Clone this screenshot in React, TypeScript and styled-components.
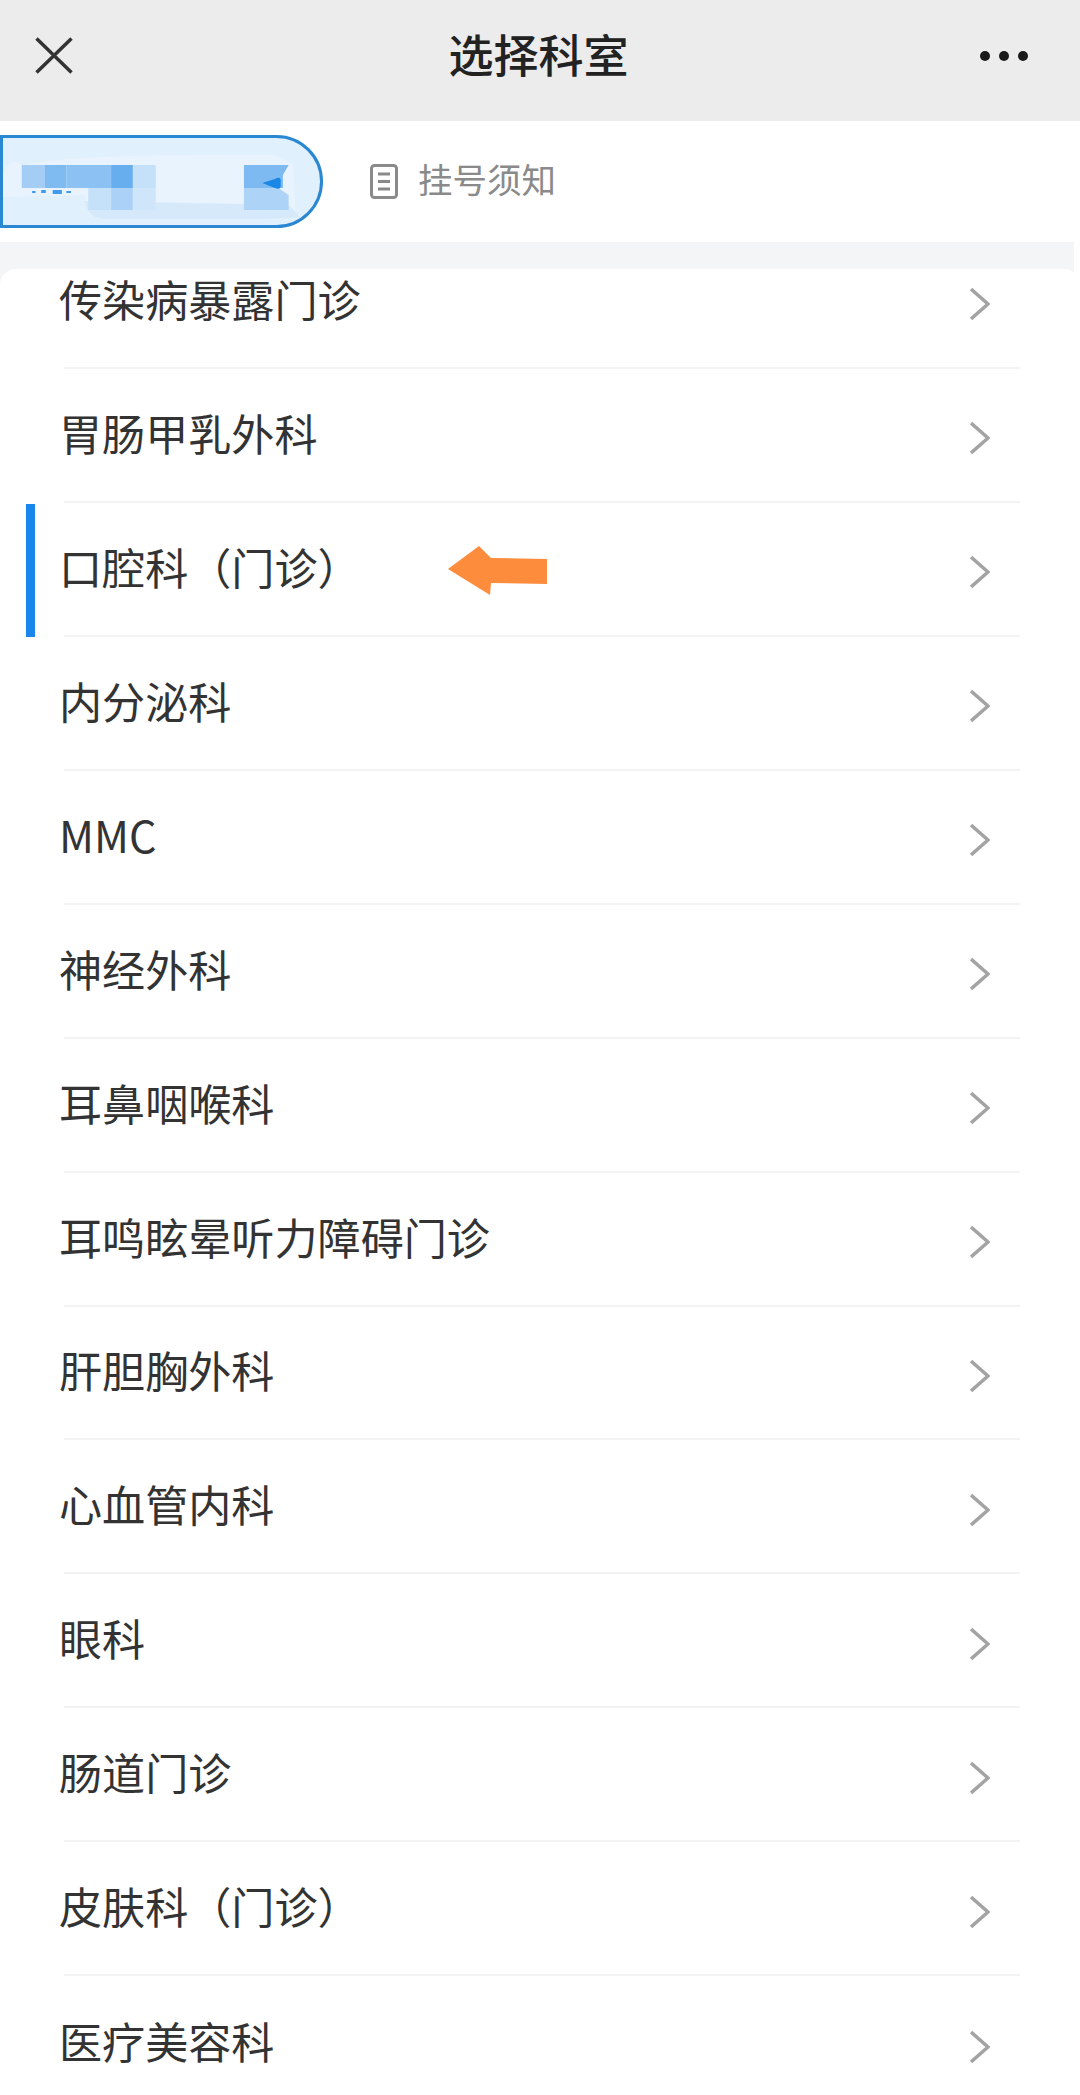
import styled, { createGlobalStyle } from 'styled-components'

const ROW_HEIGHT = 133.95

const departments = [
  '传染病暴露门诊',
  '胃肠甲乳外科',
  '口腔科（门诊）',
  '内分泌科',
  'MMC',
  '神经外科',
  '耳鼻咽喉科',
  '耳鸣眩晕听力障碍门诊',
  '肝胆胸外科',
  '心血管内科',
  '眼科',
  '肠道门诊',
  '皮肤科（门诊）',
  '医疗美容科',
]

const App = () => (
  <Page>
    <GlobalStyle />
    <NavBar>
      <CloseIcon viewBox="0 0 38 37">
        <path d="M1.5 1.5 L36.5 35.5 M36.5 1.5 L1.5 35.5" />
      </CloseIcon>
      <Title>选择科室</Title>
      <MoreIcon viewBox="0 0 48 10">
        <circle cx="5" cy="5" r="5" />
        <circle cx="24" cy="5" r="5" />
        <circle cx="43" cy="5" r="5" />
      </MoreIcon>
    </NavBar>
    <TabRow>
      <HospitalPill>
        <svg viewBox="0 0 282 93" width="323" height="93" preserveAspectRatio="none">
          <path d="M0 52 Q2 28 14 27 L20 30 Q70 18 240 20 L256 30 L258 78 L200 74 L90 72 Q76 76 74 60 L0 62 Z" fill="#e8f3fd" />
          <path d="M74 66 L252 70 L262 82 L230 84 L90 84 Q76 82 74 66 Z" fill="#d6e9fb" />
          <rect x="19" y="30" width="20" height="23" fill="#a3cdf5" />
          <rect x="39" y="30" width="19" height="23" fill="#7fbaf0" />
          <rect x="58" y="30" width="39" height="23" fill="#8cc2f3" />
          <rect x="97" y="30" width="19" height="23" fill="#66aeee" />
          <rect x="116" y="30" width="20" height="23" fill="#c5e0f9" />
          <rect x="77" y="53" width="20" height="22" fill="#c5e0f9" />
          <rect x="97" y="53" width="19" height="22" fill="#abd2f6" />
          <rect x="116" y="53" width="20" height="22" fill="#cfe5fa" />
          <path d="M213 30 H252 L247 40 V53 H213 Z" fill="#7dbaf1" />
          <path d="M213 53 H243 L252 60 V75 H213 Z" fill="#add3f7" />
          <path d="M229 48 L240 44 Q246 40 245 48 Q246 56 240 53 Z" fill="#1a86e6" />
          <path d="M28 56 h3 v2 h-3 z M36 55 h4 v3 h-4 z M46 55 h8 v4 h-8 z M58 56 h4 v2 h-4 z" fill="#3f9bea" />
        </svg>
      </HospitalPill>
      <NoticeLink>
        <NoticeIcon viewBox="0 0 28 35">
          <rect x="1.5" y="1.5" width="25" height="32" rx="3" />
          <path d="M8 10 H20 M8 17.5 H20 M8 25 H20" />
        </NoticeIcon>
        <NoticeText>挂号须知</NoticeText>
      </NoticeLink>
    </TabRow>
    <Content>
      <Card>
        <List>
          {departments.map((name, index) => (
            <Row key={name} $last={index === departments.length - 1}>
              {index === 2 && <ActiveBar />}
              <RowName>{name}</RowName>
              {index === 2 && (
                <PointerArrow viewBox="0 0 99 49">
                  <path d="M0 23 L31 0 L43 12 L99 13 L99 38 L43 37 L42 49 Z" />
                </PointerArrow>
              )}
              <Chevron viewBox="0 0 20 34">
                <path d="M1 2 L18 17 L1 32" />
              </Chevron>
            </Row>
          ))}
        </List>
      </Card>
    </Content>
  </Page>
)

const GlobalStyle = createGlobalStyle`
  html, body {
    margin: 0;
    padding: 0;
    background: #fff;
  }
`

const Page = styled.div`
  width: 1080px;
  height: 2095px;
  overflow: hidden;
  background: #fff;
  font-family: 'Noto Sans CJK SC', 'Noto Sans', sans-serif;
  color: #333;
`

const NavBar = styled.header`
  height: 121px;
  background: #ececec;
  display: grid;
  grid-template-columns: 1fr auto 1fr;
  align-items: center;
  padding-bottom: 10px;
  box-sizing: border-box;
`

const CloseIcon = styled.svg`
  width: 38px;
  height: 37px;
  margin-left: 35px;
  fill: none;
  stroke: #333;
  stroke-width: 3.5;
`

const Title = styled.h1`
  margin: 0 3px 3px 0;
  font-size: 45px;
  font-weight: 500;
  line-height: 60px;
  color: #222;
`

const MoreIcon = styled.svg`
  width: 48px;
  height: 10px;
  justify-self: end;
  margin-right: 52px;
  fill: #1a1a1a;
`

const TabRow = styled.div`
  height: 121px;
  display: flex;
  align-items: center;
  gap: 47px;
  background: #fff;
`

const HospitalPill = styled.div`
  width: 323px;
  height: 93px;
  box-sizing: border-box;
  background: #e1f0fd;
  border: 3px solid #2a88d2;
  border-radius: 0 47px 47px 0;
  overflow: hidden;
  svg {
    display: block;
    margin: -3px;
  }
`

const NoticeLink = styled.div`
  display: flex;
  align-items: center;
  gap: 20px;
`

const NoticeText = styled.span`
  font-size: 34.5px;
  line-height: 46px;
  color: #8a8a8a;
  margin-bottom: 7px;
`

const NoticeIcon = styled.svg`
  width: 28px;
  height: 35px;
  fill: none;
  stroke: #8a8a8a;
  stroke-width: 3;
`

const Content = styled.main`
  margin-right: 6px;
  padding-top: 27px;
  background: #f4f5f7;
`

const Card = styled.section`
  margin-right: -6px;
  height: 1826px;
  overflow: hidden;
  background: #fff;
  border-radius: 16px 16px 0 0;
`

const List = styled.ul`
  list-style: none;
  margin: -34px 0 0;
  padding: 0 16px 0 64px;
`

const Row = styled.li<{ $last?: boolean }>`
  height: ${ROW_HEIGHT}px;
  box-sizing: border-box;
  position: relative;
  display: flex;
  align-items: center;
  justify-content: space-between;
  padding-right: 43px;
  margin-right: 44px;
  border-bottom: ${({ $last }) => ($last ? 'none' : '2px solid #f3f3f3')};
`

const RowName = styled.span`
  font-size: 43.1px;
  line-height: 56px;
  color: #333;
  margin: 0 0 6px -5px;
`

const ActiveBar = styled.i`
  position: absolute;
  left: -38px;
  top: 1px;
  width: 9px;
  height: 133px;
  background: #1a86ec;
`

const PointerArrow = styled.svg`
  position: absolute;
  left: 384px;
  top: 43px;
  width: 99px;
  height: 49px;
  fill: #fd8c3c;
`

const Chevron = styled.svg`
  width: 20px;
  height: 34px;
  margin: 7px -13px 0 0;
  fill: none;
  stroke: #a3a3a3;
  stroke-width: 3.5;
`

export default App
